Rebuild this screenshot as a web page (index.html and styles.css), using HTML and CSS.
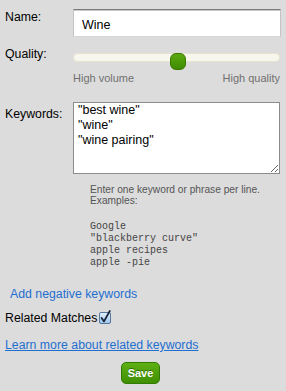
FILE: index.html
```html
<!DOCTYPE html>
<html>
<head>
<meta charset="utf-8">
<link rel="stylesheet" href="styles.css">
</head>
<body>
<div class="form">
  <div class="row row-name">
    <label class="label" for="name">Name:</label>
    <div class="field"><input id="name" class="text-input" type="text" value="Wine"></div>
  </div>
  <div class="row row-quality">
    <span class="label">Quality:</span>
    <div class="field">
      <div class="slider"><div class="track"></div><div class="thumb"></div></div>
      <div class="slider-labels"><span>High volume</span><span>High quality</span></div>
    </div>
  </div>
  <div class="row row-keywords">
    <label class="label" for="kw">Keywords:</label>
    <div class="field">
      <textarea id="kw" class="keywords">"best wine"
"wine"
"wine pairing"</textarea>
      <div class="help">
        <p>Enter one keyword or phrase per line.<br>Examples:</p>
        <pre>Google
"blackberry curve"
apple recipes
apple -pie</pre>
      </div>
    </div>
  </div>
  <a class="link neg" href="#">Add negative keywords</a>
  <div class="related">Related Matches<span class="check"><svg width="12" height="12" viewBox="0 0 12 12" overflow="visible"><defs><linearGradient id="cb" x1="0" y1="0" x2="0" y2="1"><stop offset="0" stop-color="#e6f1fc"/><stop offset="1" stop-color="#9dc5eb"/></linearGradient></defs><rect x="0.5" y="0.5" width="11" height="11" rx="1.5" fill="url(#cb)" stroke="#56779c"/><path d="M2.6 6 L5 9.4 L10.8 -1" fill="none" stroke="#15263c" stroke-width="1.8" stroke-linecap="round" stroke-linejoin="round"/></svg></span></div>
  <a class="link learn" href="#">Learn more about related keywords</a>
  <div class="actions"><button class="save" type="button">Save</button></div>
</div>
</body>
</html>
```
FILE: styles.css
```css
html, body {
  margin: 0;
  background: #dcdcdc;
}
body {
  width: 286px;
  font: 12.3px/14px "Liberation Sans", Arial, sans-serif;
  color: #000;
}
.form {
  padding: 9px 5px 0 5px;
}
.row {
  display: grid;
  grid-template-columns: 68px 1fr;
}
.row-name .label {
  padding-top: 1px;
}
.text-input {
  display: block;
  width: 100%;
  height: 28px;
  box-sizing: border-box;
  margin: 0;
  border: 1px solid #c4c4c4;
  border-top-color: #7a7a7a;
  border-bottom-color: #d6d6d6;
  box-shadow: inset 0 1px 0 #c9c9c9;
  background: #fff;
  padding: 4px 0 0 8px;
  font: 12.5px "Liberation Sans", Arial, sans-serif;
  color: #000;
  outline: none;
}
.row-quality {
  margin-top: 10px;
}
.slider {
  position: relative;
  height: 16px;
  margin-top: 6px;
  margin-right: 1px;
}
.track {
  margin-top: 3px;
  height: 9px;
  box-sizing: border-box;
  border: 1px solid #e7e3cc;
  background: #f8f7ef;
  border-radius: 5px;
}
.thumb {
  position: absolute;
  left: 97px;
  top: 0;
  width: 16px;
  height: 17px;
  box-sizing: border-box;
  border-radius: 6px;
  background: linear-gradient(#5aa911, #3f8c02);
  border: 1px solid #3a7800;
}
.slider-labels {
  display: flex;
  justify-content: space-between;
  font-size: 11px;
  line-height: 13px;
  color: #707070;
  margin-top: 3px;
  padding-right: 1px;
}
.row-keywords {
  margin-top: 17px;
}
.row-keywords .label {
  padding-top: 5px;
}
.keywords {
  display: block;
  width: 207px;
  height: 72px;
  box-sizing: border-box;
  margin: 0;
  border: 1px solid #8c8c8c;
  background: #fff;
  padding: 0 4px;
  font: 12.5px/15px "Liberation Sans", Arial, sans-serif;
  color: #000;
  outline: none;
}
.help {
  padding-left: 17px;
  margin-top: 10px;
  font-size: 10.2px;
  line-height: 11px;
  color: #555;
}
.help p {
  margin: 0;
}
.help pre {
  margin: 15px 0 0;
  font: 10px/12px "Liberation Mono", "Courier New", monospace;
  color: #444;
}
.link {
  display: block;
  color: #1f6fd0;
  text-decoration: none;
}
.neg {
  margin-top: 18px;
  padding-left: 5px;
}
.related {
  display: flex;
  align-items: flex-start;
  margin-top: 10px;
}
.check {
  display: block;
  width: 12px;
  height: 12px;
  margin-top: 1px;
  margin-left: 2px;
}
.check svg {
  display: block;
}
.learn {
  margin-top: 13px;
  text-decoration: underline;
}
.actions {
  display: flex;
  justify-content: center;
  margin-top: 10px;
  padding-right: 5px;
}
.save {
  width: 39px;
  height: 22px;
  padding: 0;
  border: 1px solid #317c00;
  border-radius: 5px;
  background: linear-gradient(#5fb015, #3f8f02);
  color: #fff;
  font: bold 11px "Liberation Sans", Arial, sans-serif;
  text-shadow: 0 -1px 0 #2b6a00;
}
```
